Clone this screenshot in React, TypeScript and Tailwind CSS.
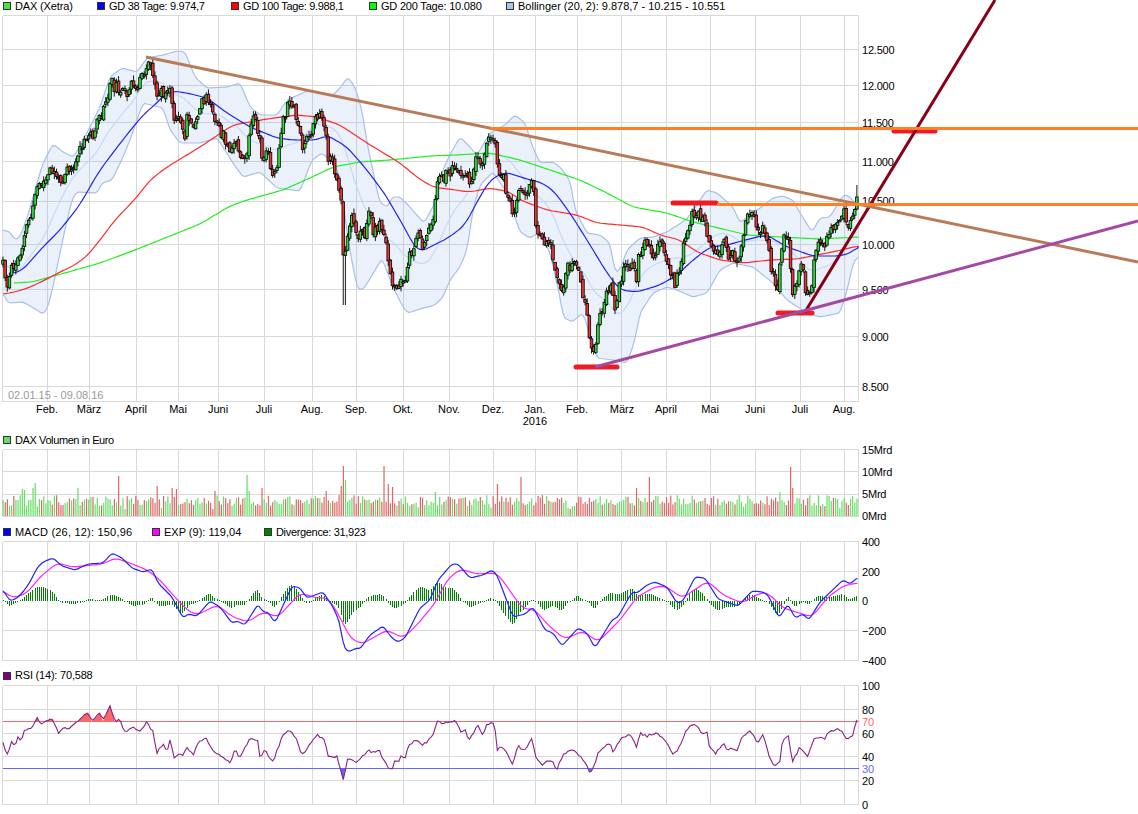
import React from 'react';

type Pt = [number, number];

// price path, page pixels (x, y)
const closes: Pt[] = [[3,260],[5,273],[7,287],[12,267],[15,268],[19,257],[23,243],[24,233],[28,222],[32,212],[35,195],[38,185],[40,185],[43,183],[47,180],[50,170],[55,171],[59,183],[64,175],[67,165],[71,172],[75,163],[77,158],[82,147],[86,142],[90,133],[93,133],[97,125],[100,118],[104,110],[108,95],[111,80],[115,88],[120,87],[124,90],[127,100],[132,83],[136,88],[142,78],[145,75],[147,63],[151,65],[154,75],[157,97],[162,88],[165,100],[170,87],[173,110],[174,125],[178,117],[182,132],[185,140],[187,113],[192,123],[194,133],[198,117],[202,100],[208,98],[212,110],[215,123],[220,130],[227,143],[230,157],[235,140],[241,163],[246,158],[249,137],[253,120],[257,128],[260,143],[262,163],[265,150],[268,155],[272,170],[273,183],[277,163],[283,123],[288,107],[293,105],[296,120],[300,130],[303,150],[306,140],[312,137],[313,127],[317,115],[322,117],[325,127],[328,160],[333,163],[337,180],[341,200],[342,228],[344,268],[347,243],[351,218],[354,225],[357,240],[362,223],[365,238],[369,210],[373,230],[377,228],[381,222],[384,233],[387,253],[389,270],[393,287],[397,280],[398,298],[402,273],[405,283],[407,267],[409,257],[413,247],[417,235],[419,237],[423,250],[424,242],[428,233],[432,227],[434,207],[437,183],[442,180],[445,175],[449,172],[453,168],[458,168],[462,175],[466,170],[468,182],[470,188],[473,167],[477,155],[483,162],[486,150],[488,138],[492,133],[494,138],[497,153],[498,177],[503,173],[505,187],[508,197],[512,210],[513,223],[516,207],[519,185],[523,197],[528,188],[533,177],[535,217],[540,240],[545,247],[550,237],[553,263],[556,280],[558,270],[561,297],[563,287],[567,263],[570,267],[573,258],[577,270],[582,287],[583,297],[586,305],[588,327],[591,340],[594,357],[596,343],[599,318],[602,308],[606,295],[609,287],[613,293],[615,313],[618,293],[622,273],[626,263],[633,267],[637,283],[638,262],[642,248],[647,243],[652,255],[657,250],[663,243],[667,262],[672,278],[675,283],[680,270],[683,243],[687,238],[690,223],[693,212],[697,213],[702,220],[705,223],[708,237],[713,245],[717,257],[720,247],[724,242],[728,255],[733,255],[738,258],[742,242],[745,222],[752,215],[755,223],[760,232],[763,220],[768,250],[772,270],[775,283],[778,287],[782,245],[785,238],[788,228],[792,300],[794,293],[798,277],[802,265],[805,287],[807,298],[812,280],[813,267],[816,248],[822,239],[826,243],[828,235],[832,230],[837,223],[840,218],[845,213],[847,230],[852,223],[854,208],[857,197]];

const bandUpper: Pt[] = [[3,230],[10,232],[15,240],[20,237],[28,215],[35,190],[43,163],[53,144],[63,152],[73,157],[78,150],[90,127],[100,107],[110,77],[122,68],[137,72],[147,58],[163,55],[177,51],[185,52],[195,77],[207,88],[227,87],[240,83],[250,107],[260,115],[277,115],[287,100],[307,91],[333,95],[340,88],[348,77],[355,87],[362,110],[367,143],[377,190],[380,203],[388,207],[392,197],[400,197],[408,205],[417,215],[424,223],[435,203],[438,183],[448,158],[460,137],[468,145],[477,155],[490,133],[505,125],[515,115],[525,123],[533,148],[540,163],[553,162],[560,167],[570,180],[575,210],[587,233],[600,235],[610,243],[615,272],[620,270],[627,250],[640,238],[653,237],[667,232],[687,219],[693,210],[707,190],[717,193],[733,207],[740,223],[747,217],[760,208],[773,198],[783,196],[793,200],[800,213],[812,232],[820,218],[830,217],[840,200],[845,194],[853,200],[858,207]];
const bandLower: Pt[] = [[3,293],[8,303],[23,302],[37,310],[42,314],[47,310],[53,287],[60,253],[67,220],[73,197],[77,192],[97,193],[102,183],[112,180],[123,157],[130,140],[143,103],[163,108],[170,130],[180,143],[200,143],[217,138],[233,163],[243,177],[260,172],[277,188],[300,191],[312,160],[322,153],[333,163],[337,167],[343,200],[348,240],[357,288],[363,290],[377,267],[382,258],[392,285],[403,307],[408,313],[420,309],[435,305],[443,297],[450,280],[460,267],[467,250],[473,210],[480,185],[493,172],[507,193],[520,232],[530,238],[540,232],[550,253],[560,297],[563,317],[572,322],[583,313],[597,358],[613,360],[627,363],[635,340],[640,313],[653,293],[667,287],[677,290],[693,297],[707,293],[720,270],[733,263],[753,267],[773,283],[787,300],[807,313],[820,317],[840,313],[848,287],[853,263],[858,257]];

const gd38: Pt[] = [[12,273],[20,272],[30,262],[40,250],[50,240],[60,230],[72,215],[83,200],[88,190],[100,170],[115,150],[133,127],[145,113],[157,103],[165,94],[173,91],[187,93],[207,98],[227,113],[250,127],[277,138],[293,140],[317,140],[327,135],[347,147],[367,170],[387,197],[395,212],[405,228],[412,243],[420,252],[432,246],[448,238],[465,225],[478,200],[490,180],[505,172],[530,180],[540,182],[553,190],[570,213],[587,240],[607,273],[620,290],[637,292],[660,285],[677,275],[693,260],[710,247],[727,245],[753,238],[767,235],[787,247],[813,256],[840,256],[853,252],[858,246]];
const gd100: Pt[] = [[3,294],[15,292],[28,288],[45,280],[60,272],[75,265],[88,255],[100,240],[115,220],[137,197],[150,180],[167,167],[200,147],[233,125],[267,119],[297,115],[317,117],[340,125],[367,143],[400,163],[418,178],[433,187],[470,192],[490,188],[510,192],[520,200],[547,210],[577,215],[597,223],[620,225],[643,227],[660,235],[680,240],[697,252],[720,260],[743,263],[770,260],[797,259],[817,255],[837,251],[858,246]];
const gd200: Pt[] = [[14,283],[32,282],[50,277],[72,271],[100,263],[135,250],[165,238],[200,224],[230,206],[247,200],[283,190],[310,178],[333,167],[360,162],[390,160],[430,156],[455,155],[490,153],[520,160],[550,170],[580,180],[607,193],[633,207],[667,213],[693,222],[727,230],[747,235],[780,237],[820,239],[858,237]];

const macd: Pt[] = [[3,590],[10,601],[17,598],[23,592],[30,582],[37,568],[43,562],[53,558],[62,566],[75,570],[88,564],[103,563],[112,553],[122,558],[132,568],[143,572],[152,569],[158,583],[172,597],[183,618],[188,614],[197,616],[210,601],[220,607],[232,623],[237,621],[245,625],[258,604],[263,612],[268,612],[275,623],[292,586],[300,588],[307,598],[323,592],[333,607],[340,623],[343,645],[348,652],[357,648],[360,649],[370,635],[383,626],[392,638],[398,642],[405,638],[420,608],[430,600],[438,580],[452,564],[458,564],[470,578],[483,575],[492,570],[497,575],[513,617],[525,614],[533,607],[545,630],[553,633],[562,646],[578,628],[587,633],[595,648],[612,620],[618,617],[632,592],[637,593],[647,585],[655,582],[667,587],[677,603],[683,601],[695,577],[705,578],[718,599],[738,606],[752,591],[763,592],[768,595],[779,618],[788,604],[795,618],[803,614],[809,620],[820,602],[843,580],[850,584],[857,578]];
const exp: Pt[] = [[3,591],[13,598],[27,593],[40,577],[57,563],[73,567],[103,564],[115,558],[130,563],[147,570],[160,580],[173,595],[187,610],[197,615],[217,605],[233,617],[248,622],[263,612],[278,617],[300,593],[317,598],[328,598],[340,617],[350,638],[362,644],[387,630],[403,638],[417,625],[435,603],[447,580],[460,569],[477,574],[497,573],[508,588],[522,608],[535,610],[550,627],[565,639],[583,631],[598,642],[620,620],[637,597],[657,586],[667,587],[682,598],[708,581],[723,595],[742,603],[760,593],[768,593],[783,608],[812,617],[827,598],[843,586],[857,583]];

const rsi: Pt[] = [[3,743],[7,755],[12,740],[15,747],[18,737],[21,740],[25,730],[32,727],[37,717],[40,724],[48,720],[53,719],[58,733],[63,727],[68,728],[77,722],[88,712],[92,722],[100,713],[103,721],[110,706],[115,722],[120,720],[125,732],[133,727],[140,732],[147,722],[153,732],[157,753],[163,743],[167,752],[170,740],[174,757],[180,752],[183,757],[187,747],[193,755],[200,740],[207,739],[210,747],[217,753],[230,763],[235,750],[240,758],[250,738],[258,740],[260,758],[265,750],[273,762],[282,737],[290,730],[297,740],[302,755],[317,735],[325,740],[328,757],[337,757],[343,780],[348,757],[357,762],[368,751],[375,752],[380,750],[383,760],[388,767],[393,769],[395,758],[398,763],[402,755],[405,758],[408,747],[417,739],[422,746],[432,737],[437,721],[442,724],[451,721],[458,722],[460,732],[465,730],[469,740],[478,725],[483,736],[486,725],[492,722],[497,733],[497,750],[502,747],[508,755],[513,767],[515,755],[519,745],[524,752],[532,739],[536,757],[543,765],[550,759],[557,769],[563,755],[572,750],[577,752],[583,760],[590,772],[593,768],[598,754],[603,747],[610,743],[613,753],[622,737],[630,735],[637,747],[640,733],[647,736],[657,733],[667,743],[673,754],[680,747],[685,732],[694,723],[702,733],[707,731],[708,745],[715,754],[723,743],[728,750],[733,748],[736,753],[743,735],[750,731],[758,743],[763,735],[768,752],[773,766],[780,762],[782,744],[788,733],[792,762],[800,747],[807,757],[815,738],[825,738],[828,733],[838,729],[842,730],[847,740],[852,737],[857,720]];

const volumeSpikes: Pt[] = [[23,27],[25,26],[33,28],[35,33],[77,28],[119,40],[157,30],[173,28],[177,27],[215,25],[247,41],[249,25],[262,28],[327,25],[342,30],[344,50],[346,36],[384,50],[388,32],[392,29],[436,24],[497,32],[520,39],[637,28],[649,39],[779,24],[790,49],[792,28]];

const gridX = [47.5, 89.5, 136.5, 178.5, 218.5, 264.5, 312.5, 356.5, 403.5, 449.5, 493.5, 535.5, 577.5, 621.5, 666.5, 710.5, 755, 800.5, 844.5];
const months: [string, number][] = [['Feb.',47],['März',89],['April',136],['Mai',178],['Juni',218],['Juli',264],['Aug.',312],['Sep.',356],['Okt.',403],['Nov.',449],['Dez.',493],['Jan.',535],['Feb.',577],['März',622],['April',666],['Mai',710],['Juni',755],['Juli',800],['Aug.',844]];

function rng(seed: number) {
  return () => {
    seed = (seed + 0x6d2b79f5) | 0;
    let t = Math.imul(seed ^ (seed >>> 15), 1 | seed);
    t = (t + Math.imul(t ^ (t >>> 7), 61 | t)) ^ t;
    return ((t ^ (t >>> 14)) >>> 0) / 4294967296;
  };
}

function at(points: Pt[], x: number) {
  if (x <= points[0][0]) return points[0][1];
  for (let i = 1; i < points.length; i++) {
    if (x <= points[i][0]) {
      const [x0, y0] = points[i - 1];
      const [x1, y1] = points[i];
      return x1 === x0 ? y1 : y0 + ((x - x0) / (x1 - x0)) * (y1 - y0);
    }
  }
  return points[points.length - 1][1];
}

const line = (points: Pt[]) => points.map((p) => p.join(',')).join(' ');

// round off the corners of a hand read curve
function smooth(points: Pt[], reach = 4): Pt[] {
  const first = points[0][0];
  const last = points[points.length - 1][0];
  const out: Pt[] = [];
  for (let x = first; x <= last; x += 2) {
    let sum = 0;
    for (let k = -reach; k <= reach; k++) sum += at(points, Math.min(last, Math.max(first, x + k)));
    out.push([x, sum / (2 * reach + 1)]);
  }
  out.push(points[points.length - 1]);
  return out;
}

const count = 400;
const xs = Array.from({ length: count }, (_, i) => 3 + i * 2.14);

const random = rng(11);
let prevClose = at(closes, 3) + 4;
const candles = xs.map((x, i) => {
  const close = i === count - 1 ? 197 : at(closes, x) + (random() - 0.5) * 11;
  const open = prevClose + (random() - 0.5) * 5;
  prevClose = close;
  const top = Math.min(open, close);
  const bottom = Math.max(open, close);
  let high = top - 0.5 - random() * 5;
  let low = bottom + 0.5 + random() * 5;
  if (x > 342 && x < 346) low = 305;
  if (i === count - 1) high = 185;
  return { x, open, close, top, bottom, high, low };
});

const volumes = xs.map((x, i) => {
  const spike = volumeSpikes.find((s) => Math.abs(s[0] - x) < 1.07);
  const h = spike ? spike[1] : 10 + random() * 11 + (random() > 0.9 ? -4 : 0);
  return { x, h, up: candles[i].close <= candles[i].open };
});

const upperCurve = smooth(bandUpper, 2);
const lowerCurve = smooth(bandLower, 2);
const midBand: Pt[] = xs.map((x) => [x, (at(smooth(bandUpper, 6), x) + at(smooth(bandLower, 6), x)) / 2]);
const macdCurve = smooth(macd, 2);
const expCurve = smooth(exp, 5);
const rsiJagged: Pt[] = xs.map((x) => [x, at(rsi, x) + (random() - 0.5) * 2.6]);
rsiJagged[rsiJagged.length - 1] = [857, 720];

function Grid({ top, bottom, rows }: { top: number; bottom: number; rows: number[] }) {
  return (
    <g stroke="#d9d9d9" strokeWidth="1" shapeRendering="crispEdges">
      {rows.map((y) => <line key={y} x1="2.5" x2="858.5" y1={y} y2={y} />)}
      {gridX.map((x) => <line key={x} x1={x} x2={x} y1={top} y2={bottom} />)}
      <line x1="2.5" x2="2.5" y1={top} y2={bottom} />
      <line x1="858.5" x2="858.5" y1={top} y2={bottom} />
    </g>
  );
}

function Axis({ labels }: { labels: [string, number, string?][] }) {
  return (
    <g className="tracking-[-0.2px]">
      {labels.map(([text, y, color]) => (
        <text key={text} x="862" y={y + 4} fill={color ?? '#000'}>{text}</text>
      ))}
    </g>
  );
}

type LegendItem = { label: string; color: string; className: string };

function Legend({ items, className }: { items: LegendItem[]; className: string }) {
  return (
    <div className={`flex items-center pl-[3px] text-[11px] text-black ${className}`}>
      {items.map((item) => (
        <div key={item.label} className={`flex items-center gap-[4px] whitespace-nowrap ${item.className}`}>
          <span className="w-[8px] h-[8px] shrink-0 border border-[#333333]" style={{ backgroundColor: item.color }} />
          <span>{item.label}</span>
        </div>
      ))}
    </div>
  );
}

export default function App() {
  return (
    <div className="w-[1138px] h-[814px] overflow-hidden bg-white flex flex-col font-['Liberation_Sans',Arial,sans-serif] text-[11px]">
      {/* Price chart */}
      <Legend
        className="h-[15px] pb-[3px]"
        items={[
          { label: 'DAX (Xetra)', color: '#44e444', className: 'w-[94px] tracking-[-0.15px]' },
          { label: 'GD 38 Tage: 9.974,7', color: '#0000ff', className: 'w-[134px] tracking-[-0.3px]' },
          { label: 'GD 100 Tage: 9.988,1', color: '#ff0000', className: 'w-[138px] tracking-[-0.35px]' },
          { label: 'GD 200 Tage: 10.080', color: '#00ff00', className: 'w-[137px] tracking-[-0.2px]' },
          { label: 'Bollinger (20, 2): 9.878,7 - 10.215 - 10.551', color: '#aac4ea', className: 'w-[300px]' },
        ]}
      />
      <svg viewBox="0 15 1138 415" className="block w-[1138px] h-[415px] shrink-0 overflow-visible">
        <Grid top={15.5} bottom={401.5} rows={[15.5, 49.5, 85.5, 122.5, 161.5, 201.5, 244.5, 289.5, 336.5, 386.5, 401.5]} />
        <polygon points={line([...upperCurve, ...[...lowerCurve].reverse()])} fill="#5b8fdf" fillOpacity="0.13" />
        <polyline points={line(upperCurve)} fill="none" stroke="#a9c0e6" strokeWidth="1.2" />
        <polyline points={line(lowerCurve)} fill="none" stroke="#a9c0e6" strokeWidth="1.2" />
        <polyline points={line(midBand)} fill="none" stroke="#c6d9f5" strokeWidth="1.2" />
        <polyline points={line(smooth(gd200, 6))} fill="none" stroke="#22ee22" strokeWidth="1.2" />
        <polyline points={line(smooth(gd100, 6))} fill="none" stroke="#ff2b2b" strokeWidth="1.2" />
        <polyline points={line(smooth(gd38, 6))} fill="none" stroke="#2222ee" strokeWidth="1.2" />
        {candles.map((c) => (
          <g key={c.x}>
            <line x1={c.x} x2={c.x} y1={c.high} y2={c.low} stroke="#000" strokeWidth="0.9" />
            <rect x={c.x - 1.3} y={c.top} width="2.6" height={Math.max(c.bottom - c.top, 1.5)} fill={c.close <= c.open ? '#2fdc3a' : '#ee3333'} stroke="#000" strokeWidth="0.8" />
          </g>
        ))}
        <text x="8" y="399" fill="#999999">02.01.15 - 09.08.16</text>
        {months.map(([m, x], i) => <text key={i} x={x} y="413" textAnchor="middle" fill="#000">{m}</text>)}
        <text x="535" y="425" textAnchor="middle" fill="#000">2016</text>
        <Axis labels={[['12.500',49.5],['12.000',85.5],['11.500',122.5],['11.000',161.5],['10.500',201],['10.000',245],['9.500',290],['9.000',337],['8.500',387]]} />
        {/* hand drawn trend lines */}
        <g fill="none" strokeWidth="5" stroke="#ed1c24" strokeLinecap="round">
          <line x1="576" x2="617" y1="367" y2="367" />
          <line x1="673" x2="716" y1="203" y2="203" />
          <line x1="778" x2="812" y1="313" y2="313" />
          <line x1="894" x2="935" y1="131" y2="131" />
        </g>
        <g fill="none" strokeWidth="3">
          <line x1="805" y1="312" x2="995" y2="0" stroke="#880015" />
          <line x1="146" y1="57" x2="1138" y2="262" stroke="#b97a57" />
          <line x1="595" y1="367" x2="1138" y2="221" stroke="#a349a4" />
          <line x1="490" y1="128.5" x2="1138" y2="128.5" stroke="#ff7f27" />
          <line x1="717" y1="204.5" x2="1138" y2="204.5" stroke="#ff7f27" />
        </g>
      </svg>

      {/* Volume */}
      <Legend className="h-[20px]" items={[{ label: 'DAX Volumen in Euro', color: '#66dd66', className: 'tracking-[-0.4px]' }]} />
      <svg viewBox="0 450 1138 72" className="block w-[1138px] h-[72px] shrink-0 overflow-visible">
        <Grid top={449.5} bottom={516.5} rows={[449.5, 471.5, 494.5, 516.5]} />
        {volumes.map((v) => (
          <rect key={v.x} x={v.x - 0.5} y={516 - v.h} width="1.2" height={v.h} fill={v.up ? '#66dd66' : '#dd6666'} />
        ))}
        <Axis labels={[['15Mrd',450],['10Mrd',472],['5Mrd',494],['0Mrd',516]]} />
      </svg>

      {/* MACD */}
      <Legend
        className="h-[20px]"
        items={[
          { label: 'MACD (26, 12): 150,96', color: '#0000ff', className: 'w-[149px] tracking-[0.2px]' },
          { label: 'EXP (9): 119,04', color: '#ff00ff', className: 'w-[112px]' },
          { label: 'Divergence: 31,923', color: '#008000', className: 'w-[150px] tracking-[-0.33px]' },
        ]}
      />
      <svg viewBox="0 542 1138 124" className="block w-[1138px] h-[124px] shrink-0 overflow-visible">
        <Grid top={541.5} bottom={660.5} rows={[541.5, 571.5, 630.5, 660.5]} />
        <g shapeRendering="crispEdges">
          {xs.map((x) => {
            const d = (at(expCurve, x) - at(macdCurve, x)) * 1.15;
            return <rect key={x} x={x - 0.5} y={d > 0 ? 601 - d : 601} width="1" height={Math.max(Math.abs(d), 1)} fill="#008000" />;
          })}
        </g>
        <polyline points={line(expCurve)} fill="none" stroke="#ff22ff" strokeWidth="1.2" />
        <polyline points={line(macdCurve)} fill="none" stroke="#2222ff" strokeWidth="1.2" />
        <Axis labels={[['400',541.5],['200',571.5],['0',600.5],['−200',631],['−400',660.5]]} />
      </svg>

      {/* RSI */}
      <Legend className="h-[19px]" items={[{ label: 'RSI (14): 70,588', color: '#800080', className: 'tracking-[-0.2px]' }]} />
      <svg viewBox="0 685 1138 129" className="block w-[1138px] h-[129px] shrink-0 overflow-visible">
        <defs>
          <clipPath id="overbought"><rect x="0" y="680" width="860" height="41" /></clipPath>
          <clipPath id="oversold"><rect x="0" y="768.5" width="860" height="40" /></clipPath>
        </defs>
        <Grid top={685.5} bottom={804.5} rows={[685.5, 709.5, 733.5, 756.5, 780.5, 804.5]} />
        <polygon points={line([[3, 721], ...rsi, [857, 721]])} fill="#ff6666" clipPath="url(#overbought)" />
        <polygon points={line([[3, 768.5], ...rsi, [857, 768.5]])} fill="#6666ff" clipPath="url(#oversold)" />
        <line x1="2.5" x2="858.5" y1="721.5" y2="721.5" stroke="#ff6666" shapeRendering="crispEdges" />
        <line x1="2.5" x2="858.5" y1="768.5" y2="768.5" stroke="#6666ff" shapeRendering="crispEdges" />
        <polyline points={line(rsiJagged)} fill="none" stroke="#882288" strokeWidth="1.1" />
        <Axis labels={[['100',685.5],['80',710],['70',722,'#ff6666'],['60',733.5],['40',757],['30',769,'#6666ff'],['20',781],['0',805]]} />
      </svg>
    </div>
  );
}
